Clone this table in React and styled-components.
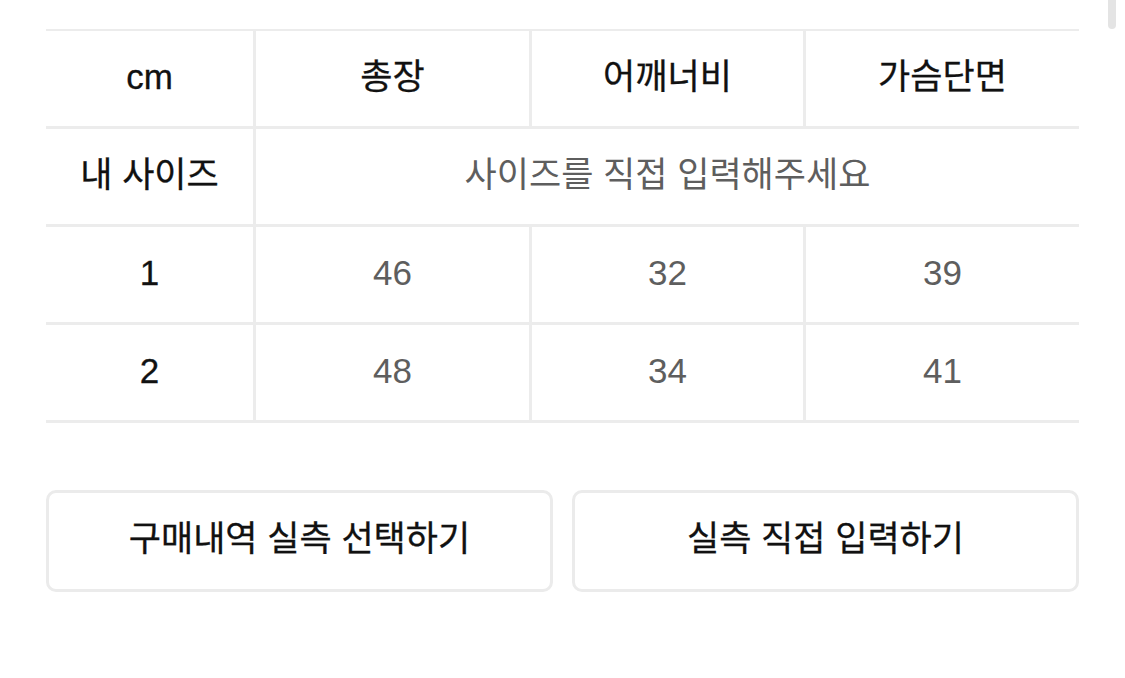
import styled, { createGlobalStyle } from "styled-components"

const GlobalStyle = createGlobalStyle`
  html, body {
    margin: 0;
    background: #fff;
  }
  body {
    font-family: "Liberation Sans", "Noto Sans CJK KR", "Noto Sans", sans-serif;
    color: #111;
  }
`

const rows = [
  { label: "1", values: ["46", "32", "39"] },
  { label: "2", values: ["48", "34", "41"] },
]

const App = () => {
  return (
    <Page>
      <GlobalStyle />
      <Scrollbar />
      <Table>
        <Cell>cm</Cell>
        <Cell>총장</Cell>
        <Cell>어깨너비</Cell>
        <Cell $last>가슴단면</Cell>

        <Cell>내 사이즈</Cell>
        <Cell $span={3} $last $muted>사이즈를 직접 입력해주세요</Cell>

        {rows.map((row) => (
          <Row key={row.label}>
            <Cell>{row.label}</Cell>
            {row.values.map((v, i) => (
              <Cell key={i} $muted $last={i === row.values.length - 1}>{v}</Cell>
            ))}
          </Row>
        ))}
      </Table>

      <Actions>
        <Button>구매내역 실측 선택하기</Button>
        <Button>실측 직접 입력하기</Button>
      </Actions>
    </Page>
  )
}

const Page = styled.div`
  position: relative;
  width: 1125px;
  height: 678px;
  padding: 29px 46px 0 46px;
  box-sizing: border-box;
`

const Scrollbar = styled.div`
  position: absolute;
  top: 0;
  right: 9px;
  width: 8px;
  height: 29px;
  border-radius: 0 0 4px 4px;
  background: #e4e4e4;
`

const Table = styled.div`
  display: grid;
  grid-template-columns: 210px 276px 274px 273px;
  grid-auto-rows: 98px;
  border-top: 2px solid #ececec;
`

const Row = styled.div`
  display: contents;
`

const Cell = styled.div`
  grid-column: span ${(p) => p.$span || 1};
  display: flex;
  align-items: center;
  justify-content: center;
  border-bottom: 3px solid #ececec;
  border-right: ${(p) => (p.$last ? "none" : "3px solid #ececec")};
  font-size: 35px;
  line-height: 1;
  font-weight: 400;
  color: ${(p) => (p.$muted ? "#5e5e5e" : "#111")};
  -webkit-text-stroke: ${(p) => (p.$muted ? "0" : "0.3px #111")};
  padding-bottom: 5px;
`

const Actions = styled.div`
  display: grid;
  grid-template-columns: 507px 507px;
  gap: 19px;
  margin-top: 67px;
`

const Button = styled.button`
  height: 102px;
  background: #fff;
  border: 3px solid #ebebeb;
  border-radius: 10px;
  font-family: inherit;
  font-size: 35px;
  font-weight: 400;
  color: #111;
  -webkit-text-stroke: 0.3px #111;
  line-height: 1;
  padding: 0 0 6px 0;
`

export default App
